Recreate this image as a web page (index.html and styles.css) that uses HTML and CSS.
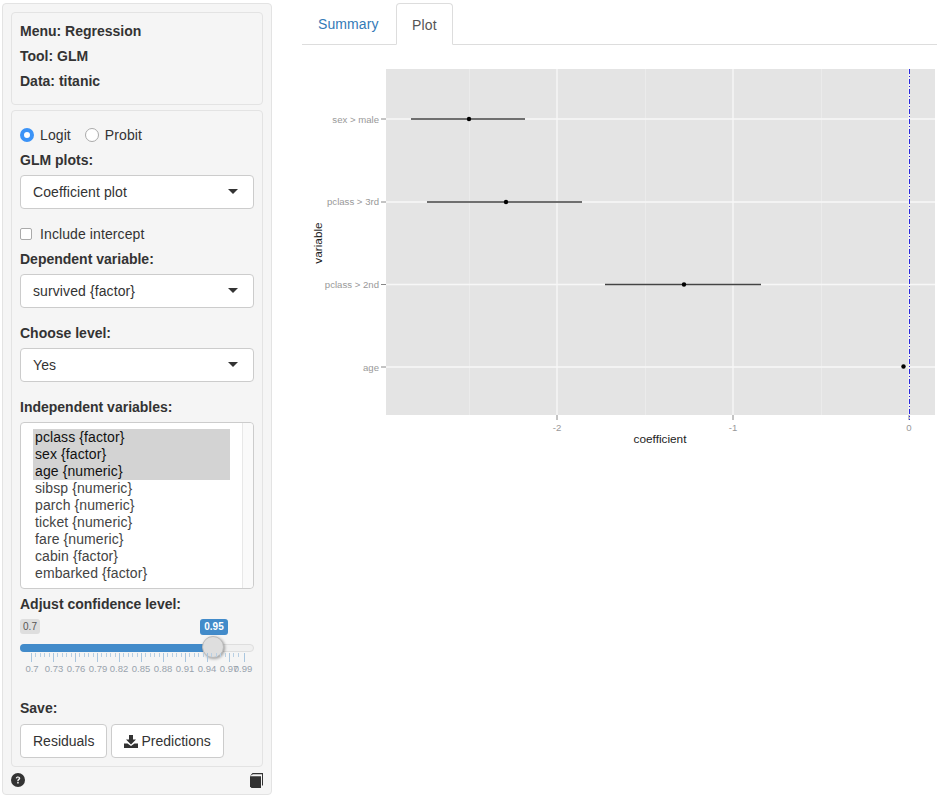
FILE: index.html
```html
<!DOCTYPE html>
<html>
<head>
    <title>Regression GLM</title>
    <link rel="stylesheet" href="styles.css">
</head>
<body>
    <div class="page">
        <aside class="sidebar">
            <div class="well info">
                <p>Menu: Regression</p>
                <p>Tool: GLM</p>
                <p>Data: titanic</p>
            </div>
            <div class="well controls">
                <div class="radios">
                    <span class="radio on"></span><span class="opt">Logit</span>
                    <span class="radio"></span><span class="opt">Probit</span>
                </div>
                <div class="label first">GLM plots:</div>
                <div class="select">Coefficient plot<span class="caret"></span></div>
                <div class="check"><span class="box"></span>Include intercept</div>
                <div class="label dep">Dependent variable:</div>
                <div class="select">survived {factor}<span class="caret"></span></div>
                <div class="label level">Choose level:</div>
                <div class="select">Yes<span class="caret"></span></div>
                <div class="label indep">Independent variables:</div>
                <div class="listbox">
                    <ul>
                        <li class="sel">pclass {factor}</li>
                        <li class="sel">sex {factor}</li>
                        <li class="sel">age {numeric}</li>
                        <li>sibsp {numeric}</li>
                        <li>parch {numeric}</li>
                        <li>ticket {numeric}</li>
                        <li>fare {numeric}</li>
                        <li>cabin {factor}</li>
                        <li>embarked {factor}</li>
                    </ul>
                    <div class="scrollbar"></div>
                </div>
                <div class="label conf">Adjust confidence level:</div>
                <div class="slider">
                    <span class="min">0.7</span>
                    <span class="val">0.95</span>
                    <div class="track"><div class="bar"></div></div>
                    <div class="handle"></div>
                    <svg class="ticks" width="234" height="12">
                        <path d="M11.5 0v9M33.5 0v9M55.5 0v9M77.5 0v9M99.5 0v9M121.5 0v9M143.5 0v9M165.5 0v9M187.5 0v9M209.5 0v9M224.5 0v9" stroke="#a9c6df"/>
                        <path d="M15.5 0v4M20.5 0v4M24.5 0v4M29.5 0v4M37.5 0v4M42.5 0v4M46.5 0v4M51.5 0v4M59.5 0v4M64.5 0v4M68.5 0v4M73.5 0v4M81.5 0v4M86.5 0v4M90.5 0v4M95.5 0v4M103.5 0v4M108.5 0v4M112.5 0v4M117.5 0v4M125.5 0v4M130.5 0v4M134.5 0v4M139.5 0v4M147.5 0v4M152.5 0v4M156.5 0v4M161.5 0v4M169.5 0v4M174.5 0v4M178.5 0v4M183.5 0v4M191.5 0v4M196.5 0v4M200.5 0v4M205.5 0v4M213.5 0v4M218.5 0v4" stroke="#b8cfe3"/>
                    </svg>
                    <span class="tick" style="left:12px">0.7</span>
                    <span class="tick" style="left:34px">0.73</span>
                    <span class="tick" style="left:56px">0.76</span>
                    <span class="tick" style="left:78px">0.79</span>
                    <span class="tick" style="left:99px">0.82</span>
                    <span class="tick" style="left:121px">0.85</span>
                    <span class="tick" style="left:143px">0.88</span>
                    <span class="tick" style="left:165px">0.91</span>
                    <span class="tick" style="left:187px">0.94</span>
                    <span class="tick" style="left:209px">0.97</span>
                    <span class="tick" style="left:223px">0.99</span>
                </div>
                <div class="label save">Save:</div>
                <div class="buttons">
                    <button>Residuals</button>
                    <button>
                        <svg width="14" height="13" viewBox="0 0 14 13"><path fill="#333" d="M5 0h4v4.5h3L7 9.5 2 4.500h3zM0 8.500h3.500L7 11l3.500-2.500H14V13H0z"/></svg>
                        Predictions
                    </button>
                </div>
            </div>
            <div class="foot">
                <svg width="14" height="14" viewBox="0 0 14 14"><circle cx="7" cy="7" r="7" fill="#333"/><path d="M4.700 5.300C4.900 4 5.900 3.400 7 3.400c1.300 0 2.300.8 2.300 1.900 0 1.700-1.800 1.600-1.800 2.900H6.200c0-1.900 1.600-2 1.600-2.900 0-.4-.3-.7-.8-.7s-.8.300-1 .9zM6.200 9h1.500v1.500H6.200z" fill="#f5f5f5"/></svg>
                <svg width="13" height="15" viewBox="0 0 13 15"><path fill="#333" d="M0 3l2.500-3H13v12l-1 1V1.200H3z"/><path fill="#333" d="M0 3.200h11V15H1.500L0 13.500z"/></svg>
            </div>
        </aside>
        <main class="content">
            <nav class="tabs">
                <a class="tab">Summary</a>
                <a class="tab active">Plot</a>
            </nav>
            <svg class="plot" width="635" height="390" viewBox="302 60 635 390">
                <rect x="386" y="69" width="549" height="346" fill="#e4e4e4"/>
                <g stroke="#ebebeb" stroke-width="1">
                    <path d="M469.500 69V415M645.500 69V415M821.500 69V415"/>
                </g>
                <g stroke="#f7f7f7" stroke-width="1.300">
                    <path d="M557 69V415M733 69V415M909 69V415"/>
                    <path d="M386 119H935M386 202H935M386 284.500H935M386 367H935"/>
                </g>
                <g stroke="#888" stroke-width="1">
                    <path d="M381 119H386M381 202H386M381 284.500H386M381 367H386"/>
                    <path d="M557 415V420M733 415V420M909 415V420"/>
                </g>
                <path d="M909.500 69V420" stroke="#2a2ae0" stroke-width="1" stroke-dasharray="5 2 1 2"/>
                <g stroke="#444" stroke-width="1.300">
                    <path d="M411 119H525M427 202H582M605 284.500H761"/>
                </g>
                <g fill="#000">
                    <circle cx="469" cy="119" r="2.200"/>
                    <circle cx="506" cy="202" r="2.200"/>
                    <circle cx="684" cy="284.500" r="2.200"/>
                    <circle cx="903.500" cy="366.500" r="2.200"/>
                </g>
                <g class="axis-y" text-anchor="end">
                    <text x="379" y="122.500">sex &gt; male</text>
                    <text x="379" y="205">pclass &gt; 3rd</text>
                    <text x="379" y="288">pclass &gt; 2nd</text>
                    <text x="379" y="370.500">age</text>
                </g>
                <g class="axis-x" text-anchor="middle">
                    <text x="557" y="431">-2</text>
                    <text x="733" y="431">-1</text>
                    <text x="909" y="431">0</text>
                </g>
                <text class="title" x="660" y="443" text-anchor="middle">coefficient</text>
                <text class="title" transform="translate(322 243) rotate(-90)" text-anchor="middle">variable</text>
            </svg>
        </main>
    </div>
</body>
</html>
```

FILE: styles.css
```css
body {
    margin: 0;
    font-family: "Liberation Sans", Arial, sans-serif;
    font-size: 14px;
    color: #333;
    background-color: #fff;
}
.page {
    display: flex;
    align-items: flex-start;
}
.sidebar {
    box-sizing: border-box;
    width: 270px;
    height: 792px;
    margin: 3px 0 0 2px;
    padding: 8px 8px 0;
    background-color: #f5f5f5;
    border: 1px solid #e3e3e3;
    border-radius: 4px;
}
.well {
    box-sizing: border-box;
    background-color: #f5f5f5;
    border: 1px solid #e3e3e3;
    border-radius: 4px;
}
.info {
    height: 93px;
    padding: 10px 8px 0;
    font-weight: bold;
}
.info p {
    margin: 0 0 9px;
    line-height: 16px;
}
.controls {
    height: 657px;
    margin-top: 5px;
    padding: 15px 8px 0;
}
.radios {
    display: flex;
    align-items: center;
    height: 17px;
}
.radio {
    box-sizing: border-box;
    width: 14px;
    height: 14px;
    border: 1px solid #aaa;
    border-radius: 50%;
    background-color: #fff;
}
.radio.on {
    border: 4.500px solid #3b93f7;
}
.opt {
    margin: 0 14px 0 6px;
    letter-spacing: 0.1px;
}
.opt:last-child {
    margin-right: 0;
}
.label {
    font-weight: bold;
    line-height: 18px;
}
.label.first {
    margin-top: 8px;
    margin-bottom: 6px;
}
.select {
    position: relative;
    box-sizing: border-box;
    height: 34px;
    padding: 0 12px;
    line-height: 32px;
    letter-spacing: 0.1px;
    background-color: #fff;
    border: 1px solid #ccc;
    border-radius: 4px;
}
.caret {
    position: absolute;
    right: 15px;
    top: 13px;
    border-top: 5px solid #333;
    border-left: 5px solid transparent;
    border-right: 5px solid transparent;
}
.check {
    display: flex;
    align-items: center;
    margin-top: 16px;
    height: 18px;
    letter-spacing: 0.1px;
}
.box {
    box-sizing: border-box;
    width: 12px;
    height: 12px;
    margin-right: 8px;
    background-color: #fff;
    border: 1px solid #aaa;
    border-radius: 2px;
}
.label.dep {
    margin-top: 7px;
    margin-bottom: 6px;
}
.label.level {
    margin-top: 16px;
    margin-bottom: 6px;
}
.label.indep {
    margin-top: 16px;
    margin-bottom: 6px;
}
.listbox {
    display: flex;
    justify-content: space-between;
    box-sizing: border-box;
    height: 167px;
    background-color: #fff;
    border: 1px solid #ccc;
    border-radius: 4px;
}
.listbox ul {
    flex: 0 0 197px;
    margin: 6px 0 0 12px;
    padding: 0;
    list-style: none;
    letter-spacing: 0.1px;
    color: #444;
}
.listbox li {
    height: 17px;
    padding-left: 2px;
    line-height: 17px;
}
.listbox li.sel {
    color: #111;
    background-color: #d3d3d3;
}
.scrollbar {
    width: 10px;
    border-left: 1px solid #e8e8e8;
    background-color: #fafafa;
    border-radius: 0 4px 4px 0;
}
.label.conf {
    margin-top: 6px;
}
.slider {
    position: relative;
    height: 66px;
    margin-top: 4px;
}
.min, .val {
    position: absolute;
    top: 2px;
    border-radius: 3px;
    font-size: 10px;
    line-height: 15px;
    text-align: center;
}
.min {
    left: 0;
    width: 20px;
    background-color: #dedede;
    color: #555;
}
.val {
    left: 180px;
    width: 28px;
    height: 16px;
    background-color: #428bca;
    color: #fff;
    font-weight: bold;
}
.track {
    position: absolute;
    left: 0;
    right: 0;
    top: 27px;
    height: 8px;
    background-color: #f0f0f0;
    border: 1px solid #dedede;
    box-sizing: border-box;
    border-radius: 4px;
}
.bar {
    width: 192px;
    height: 8px;
    margin: -1px 0 0 -1px;
    background-color: #428bca;
    border-radius: 4px 0 0 4px;
}
.handle {
    position: absolute;
    left: 182px;
    top: 19px;
    box-sizing: border-box;
    width: 22px;
    height: 22px;
    background-color: #dedede;
    border: 1px solid #bbb;
    border-radius: 50%;
    box-shadow: 1px 1px 3px rgba(0, 0, 0, 0.35);
}
.ticks {
    position: absolute;
    left: 0;
    top: 36px;
}
.tick {
    position: absolute;
    top: 46px;
    transform: translateX(-50%);
    font-size: 9.500px;
    line-height: 12px;
    color: #99a3ad;
}
.label.save {
    margin-top: 16px;
    margin-bottom: 7px;
}
.buttons {
    display: flex;
    gap: 4px;
}
.buttons button {
    display: flex;
    align-items: center;
    gap: 3px;
    box-sizing: border-box;
    height: 34px;
    padding: 0 12px;
    font-family: inherit;
    font-size: 14px;
    color: #333;
    background-color: #fff;
    border: 1px solid #ccc;
    border-radius: 4px;
}
.foot {
    display: flex;
    justify-content: space-between;
    align-items: center;
    height: 22px;
    margin-top: 2px;
}
.content {
    flex: 1;
    margin-left: 30px;
    min-width: 0;
}
.tabs {
    display: flex;
    box-sizing: border-box;
    height: 42px;
    margin-top: 3px;
    padding-left: 1px;
    border-bottom: 1px solid #ddd;
}
.tab {
    box-sizing: border-box;
    height: 42px;
    padding: 0 15px;
    margin-right: 2px;
    line-height: 42px;
    letter-spacing: 0.1px;
    color: #337ab7;
}
.tab.active {
    padding: 0 15px 0 15.500px;
    color: #555;
    background-color: #fff;
    border: 1px solid #ddd;
    border-bottom-color: #fff;
    border-radius: 4px 4px 0 0;
}
.plot {
    display: block;
    margin-top: 15px;
}
.axis-y text, .axis-x text {
    font-size: 9.600px;
    fill: #999;
}
.title {
    font-size: 11.800px;
    fill: #222;
}
```
